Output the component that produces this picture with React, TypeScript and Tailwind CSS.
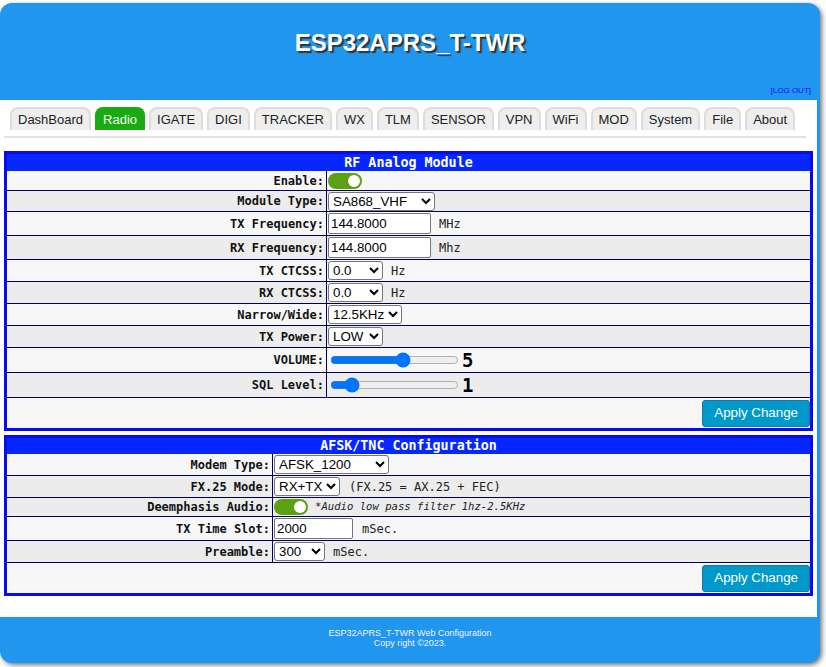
import React from "react";

const mono = "font-['DejaVu_Sans_Mono',monospace]";
const sans = "font-['Liberation_Sans',Arial,sans-serif]";

const tabs = ["DashBoard", "Radio", "IGATE", "DIGI", "TRACKER", "WX", "TLM", "SENSOR", "VPN", "WiFi", "MOD", "System", "File", "About"];

const selectCls = `${sans} text-[13.33px] text-black bg-white border border-[#767676] rounded-[3px] h-[19px] pl-0`;
const inputCls = `${sans} text-[13.33px] text-black bg-white border border-[#767676] rounded-[2px] h-[21px] px-[2px] py-[1px]`;

interface RowProps {
  label: string;
  h: string;
  dark?: boolean;
  labelW: string;
  children?: React.ReactNode;
}

const Row = ({ label, h, dark = false, labelW, children }: RowProps) => (
  <div className={`flex border-b border-[#00005a] ${h} ${dark ? "bg-[#ececec]" : "bg-[#f7f7f7]"}`}>
    <div className={`${labelW} shrink-0 border-r border-[#00005a] flex items-center justify-end pr-[2px] font-bold text-[12px] text-[#111]`}>
      {label}
    </div>
    <div className="flex items-center pl-[1px] text-[12px] text-[#222]">{children}</div>
  </div>
);

const Toggle = () => (
  <div className="w-[34px] h-[16px] rounded-full bg-[#5ca014] flex items-center justify-end pr-[2px]">
    <div className="w-[12px] h-[12px] rounded-full bg-white" />
  </div>
);

const ApplyRow = () => (
  <div className="h-[30px] bg-[#f7f7f7] flex items-center justify-end">
    <button className={`${sans} h-[27px] px-[11px] text-[13.33px] text-white bg-[#0099cc] border border-[#1677a8] rounded-[3px]`}>
      Apply Change
    </button>
  </div>
);

export default function App() {
  return (
    <div className="min-h-screen bg-white pt-[3px]">
      <div className={`w-[820px] h-[660px] rounded-[12px] bg-[#2196ee] overflow-hidden shadow-[2px_2px_5px_rgba(0,0,0,0.55)] ${mono}`}>
        {/* header */}
        <div className="h-[97px] flex flex-col">
          <div className={`${sans} pt-[26px] text-center text-[24px] leading-[28px] font-bold text-white [text-shadow:2px_2px_1px_#333]`}>
            ESP32APRS_T-TWR
          </div>
          <div className={`${sans} mt-auto pb-[4px] pr-[9px] text-right text-[8px] leading-[10px] text-[#1010ff]`}>
            [LOG OUT]
          </div>
        </div>

        {/* body */}
        <div className="w-[817px] h-[517px] bg-white px-[4px]">
          <div className="pt-[7px] pl-[6px]">
            <div className="flex gap-[4px]">
              {tabs.map((t) => (
                <div
                  key={t}
                  className={`${sans} h-[23px] px-[6px] flex items-center text-[13px] border-[2px] border-b-0 rounded-t-[8px] ${
                    t === "Radio" ? "bg-[#1aab14] border-[#1aab14] text-[#f2fff0]" : "bg-[#eeeeee] border-[#dddddd] text-[#222]"
                  }`}
                >
                  {t}
                </div>
              ))}
            </div>
          </div>
          <div className="mt-[6px] h-[2px] w-[802px] bg-[#e2e2e2]" />

          {/* RF Analog Module */}
          <div className="mt-[13px] border-[3px] border-[#0a0af0]">
            <div className="h-[17px] bg-[#0628ff] text-center text-white font-bold text-[13.33px] leading-[17px]">
              RF Analog Module
            </div>
            <Row label="Enable:" h="h-[20px]" labelW="w-[320px]">
              <Toggle />
            </Row>
            <Row label="Module Type:" h="h-[21px]" dark labelW="w-[320px]">
              <select className={`${selectCls} w-[107px]`} defaultValue="SA868_VHF">
                <option>SA868_VHF</option>
                <option>SA868_UHF</option>
              </select>
            </Row>
            <Row label="TX Frequency:" h="h-[24px]" labelW="w-[320px]">
              <input className={`${inputCls} w-[103px]`} defaultValue="144.8000" />
              <span className="ml-[8px]">MHz</span>
            </Row>
            <Row label="RX Frequency:" h="h-[24px]" dark labelW="w-[320px]">
              <input className={`${inputCls} w-[103px]`} defaultValue="144.8000" />
              <span className="ml-[8px]">Mhz</span>
            </Row>
            <Row label="TX CTCSS:" h="h-[22px]" labelW="w-[320px]">
              <select className={`${selectCls} w-[55px]`} defaultValue="0.0">
                <option>0.0</option>
              </select>
              <span className="ml-[8px]">Hz</span>
            </Row>
            <Row label="RX CTCSS:" h="h-[22px]" dark labelW="w-[320px]">
              <select className={`${selectCls} w-[55px]`} defaultValue="0.0">
                <option>0.0</option>
              </select>
              <span className="ml-[8px]">Hz</span>
            </Row>
            <Row label="Narrow/Wide:" h="h-[22px]" labelW="w-[320px]">
              <select className={`${selectCls} w-[74px]`} defaultValue="12.5KHz">
                <option>12.5KHz</option>
                <option>25KHz</option>
              </select>
            </Row>
            <Row label="TX Power:" h="h-[22px]" dark labelW="w-[320px]">
              <select className={`${selectCls} w-[55px]`} defaultValue="LOW">
                <option>LOW</option>
                <option>HIGH</option>
              </select>
            </Row>
            <Row label="VOLUME:" h="h-[25px]" labelW="w-[320px]">
              <input type="range" min={1} max={8} defaultValue={5} className="ml-[2px] w-[129px]" />
              <span className="ml-[3px] text-[19px] font-bold text-black leading-none">5</span>
            </Row>
            <Row label="SQL Level:" h="h-[25px]" dark labelW="w-[320px]">
              <input type="range" min={0} max={8} defaultValue={1} className="ml-[2px] w-[129px]" />
              <span className="ml-[3px] text-[19px] font-bold text-black leading-none">1</span>
            </Row>
            <ApplyRow />
          </div>

          {/* AFSK/TNC Configuration */}
          <div className="mt-[4px] border-[3px] border-[#0a0af0]">
            <div className="h-[16px] bg-[#0628ff] text-center text-white font-bold text-[13.33px] leading-[16px]">
              AFSK/TNC Configuration
            </div>
            <Row label="Modem Type:" h="h-[22px]" labelW="w-[266px]">
              <select className={`${selectCls} w-[115px]`} defaultValue="AFSK_1200">
                <option>AFSK_1200</option>
                <option>AFSK_300</option>
              </select>
            </Row>
            <Row label="FX.25 Mode:" h="h-[22px]" dark labelW="w-[266px]">
              <select className={`${selectCls} w-[66px]`} defaultValue="RX+TX">
                <option>RX+TX</option>
                <option>RX</option>
                <option>NONE</option>
              </select>
              <span className="ml-[9px]">(FX.25 = AX.25 + FEC)</span>
            </Row>
            <Row label="Deemphasis Audio:" h="h-[19px]" dark labelW="w-[266px]">
              <Toggle />
              <span className="ml-[7px] italic text-[10.6px]">*Audio low pass filter 1hz-2.5KHz</span>
            </Row>
            <Row label="TX Time Slot:" h="h-[24px]" labelW="w-[266px]">
              <input className={`${inputCls} w-[79px]`} defaultValue="2000" />
              <span className="ml-[9px]">mSec.</span>
            </Row>
            <Row label="Preamble:" h="h-[22px]" dark labelW="w-[266px]">
              <select className={`${selectCls} w-[51px]`} defaultValue="300">
                <option>300</option>
              </select>
              <span className="ml-[8px]">mSec.</span>
            </Row>
            <ApplyRow />
          </div>
        </div>

        {/* footer */}
        <div className={`${sans} h-[46px] pt-[11px] text-center text-[9px] leading-[10px] text-[#eef4ff]`}>
          <div>ESP32APRS_T-TWR Web Configuration</div>
          <div>Copy right ©2023.</div>
        </div>
      </div>
    </div>
  );
}
